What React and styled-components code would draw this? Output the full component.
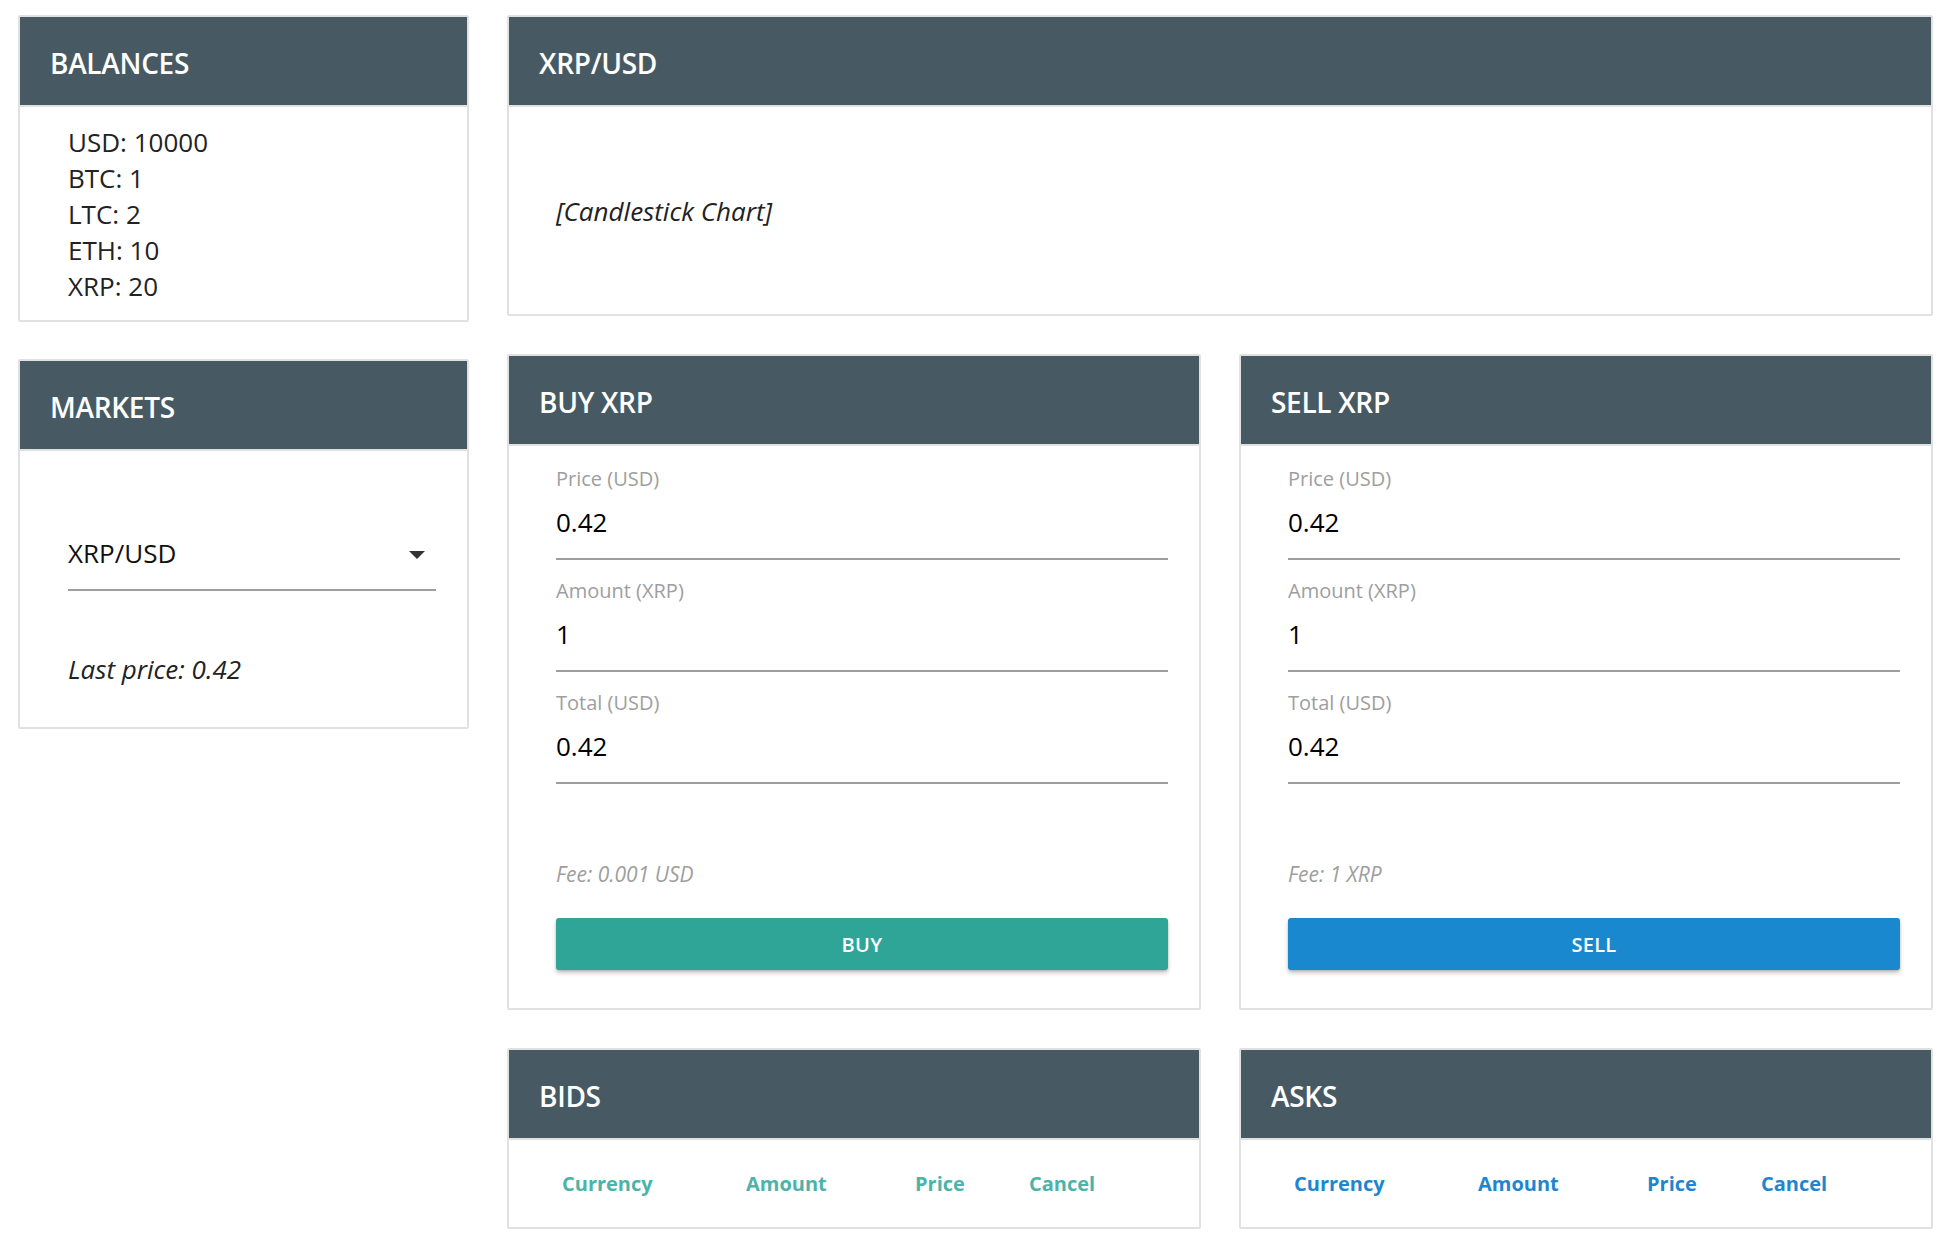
import styled, { createGlobalStyle } from "styled-components";

const GlobalStyle = createGlobalStyle`
  body {
    margin: 0;
    background: #fff;
    font-family: "Open Sans", "DejaVu Sans", sans-serif;
    color: rgba(0, 0, 0, 0.87);
  }
`;

const Page = styled.div`
  display: grid;
  grid-template-columns: 451px 1fr;
  column-gap: 38px;
  align-items: start;
  padding: 15px 19px 20px 18px;
`;

const Column = styled.div`
  display: flex;
  flex-direction: column;
  gap: ${(p) => p.$gap}px;
`;

const PairRow = styled.div`
  display: grid;
  grid-template-columns: 1fr 1fr;
  column-gap: 38px;
`;

const Card = styled.section`
  border: 2px solid #e1e1e1;
  border-radius: 2px;
  background: #fff;
  overflow: hidden;
`;

const CardHeader = styled.header`
  display: flex;
  align-items: center;
  height: 84px;
  padding: 4px 30px 0;
  background: #475a63;
  border-bottom: 2px solid #e1e1e1;
  color: #fff;
  font-size: 28px;
  font-weight: 600;
  letter-spacing: -0.3px;
`;

const CardBody = styled.div`
  padding: ${(p) => p.$pad || "17px 31px 16px 48px"};
`;

const BalanceList = styled.ul`
  list-style: none;
  margin: 0;
  padding: 0;
  font-size: 26px;
  line-height: 36px;
  color: #222;
`;

const SelectBox = styled.div`
  display: flex;
  align-items: center;
  justify-content: space-between;
  padding: 0 11px 18px 0;
  border-bottom: 2px solid #9e9e9e;
  font-size: 26px;
  line-height: 36px;
  color: #111;
`;

const Caret = styled.span`
  width: 0;
  height: 0;
  border-left: 8px solid transparent;
  border-right: 8px solid transparent;
  border-top: 8px solid #333;
  margin-top: 4px;
`;

const Note = styled.p`
  margin: ${(p) => p.$margin || "0"};
  font-size: ${(p) => p.$size || 26}px;
  line-height: ${(p) => p.$line || 36}px;
  font-style: italic;
  color: ${(p) => p.$color || "#222"};
`;

const ChartArea = styled.div`
  display: flex;
  align-items: center;
  height: 207px;
  padding: 0 31px 0 47px;
`;

const Field = styled.div`
  display: flex;
  flex-direction: column;
  margin-bottom: 17px;
  border-bottom: 2px solid #9e9e9e;
  padding-bottom: 18px;
`;

const FieldLabel = styled.label`
  font-size: 20px;
  line-height: 28px;
  color: #9e9e9e;
  margin-bottom: 11px;
`;

const FieldValue = styled.span`
  font-size: 26px;
  line-height: 36px;
  color: #000;
`;

const ActionButton = styled.button`
  display: block;
  width: 100%;
  height: 52px;
  margin-top: 30px;
  border: none;
  border-radius: 3px;
  background: ${(p) => p.$color};
  color: #fff;
  font-family: inherit;
  font-size: 20px;
  font-weight: 600;
  letter-spacing: 0.3px;
  box-shadow: 0 3px 4px rgba(0, 0, 0, 0.22), 0 1px 2px rgba(0, 0, 0, 0.12);
  cursor: pointer;
`;

const HeadRow = styled.div`
  display: grid;
  grid-template-columns: 184px 169px 114px auto;
  align-items: center;
  height: 87px;
  padding-left: 53px;
  font-size: 20px;
  font-weight: 700;
  color: ${(p) => p.$color};
`;

const balances = [
  ["USD", 10000],
  ["BTC", 1],
  ["LTC", 2],
  ["ETH", 10],
  ["XRP", 20],
];

const OrderForm = ({ side, fee, color }) => (
  <Card>
    <CardHeader>{side} XRP</CardHeader>
    <CardBody $pad="19px 31px 38px 47px">
      <Field>
        <FieldLabel>Price (USD)</FieldLabel>
        <FieldValue>0.42</FieldValue>
      </Field>
      <Field>
        <FieldLabel>Amount (XRP)</FieldLabel>
        <FieldValue>1</FieldValue>
      </Field>
      <Field>
        <FieldLabel>Total (USD)</FieldLabel>
        <FieldValue>0.42</FieldValue>
      </Field>
      <Note $size={21} $line={28} $color="#9e9e9e" $margin="76px 0 0">
        Fee: {fee}
      </Note>
      <ActionButton $color={color}>{side}</ActionButton>
    </CardBody>
  </Card>
);

const OrderBook = ({ title, color }) => (
  <Card>
    <CardHeader>{title}</CardHeader>
    <HeadRow $color={color}>
      <span>Currency</span>
      <span>Amount</span>
      <span>Price</span>
      <span>Cancel</span>
    </HeadRow>
  </Card>
);

export default function App() {
  return (
    <>
      <GlobalStyle />
      <Page>
        <Column $gap={37}>
          <Card>
            <CardHeader>BALANCES</CardHeader>
            <CardBody>
              <BalanceList>
                {balances.map(([k, v]) => (
                  <li key={k}>
                    {k}: {v}
                  </li>
                ))}
              </BalanceList>
            </CardBody>
          </Card>
          <Card>
            <CardHeader>MARKETS</CardHeader>
            <CardBody $pad="84px 31px 40px 48px">
              <SelectBox>
                XRP/USD
                <Caret />
              </SelectBox>
              <Note $margin="60px 0 0">Last price: 0.42</Note>
            </CardBody>
          </Card>
        </Column>
        <Column $gap={38}>
          <Card>
            <CardHeader>XRP/USD</CardHeader>
            <ChartArea>
              <Note>[Candlestick Chart]</Note>
            </ChartArea>
          </Card>
          <PairRow>
            <OrderForm side="BUY" fee="0.001 USD" color="#2ea597" />
            <OrderForm side="SELL" fee="1 XRP" color="#1a88ce" />
          </PairRow>
          <PairRow>
            <OrderBook title="BIDS" color="#4cb3a8" />
            <OrderBook title="ASKS" color="#1e86cf" />
          </PairRow>
        </Column>
      </Page>
    </>
  );
}
